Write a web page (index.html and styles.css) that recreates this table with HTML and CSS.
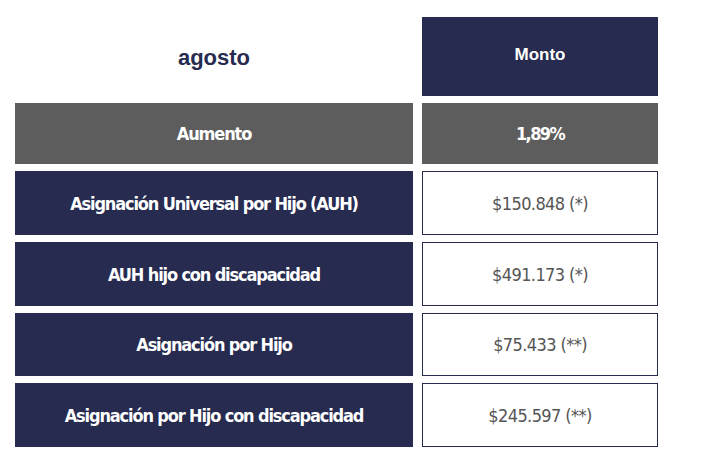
FILE: index.html
```html
<!DOCTYPE html>
<html lang="es">
<head>
<meta charset="utf-8">
<title>Asignaciones agosto</title>
<link rel="stylesheet" href="styles.css">
</head>
<body>
<div class="table">
  <div class="cell head-month">agosto</div>
  <div class="cell head-amount">Monto</div>

  <div class="cell gray label">Aumento</div>
  <div class="cell gray label pct">1,89%</div>

  <div class="cell navy label">Asignación Universal por Hijo (AUH)</div>
  <div class="cell value">$150.848 (*)</div>

  <div class="cell navy label">AUH hijo con discapacidad</div>
  <div class="cell value">$491.173 (*)</div>

  <div class="cell navy label">Asignación por Hijo</div>
  <div class="cell value">$75.433 (**)</div>

  <div class="cell navy label">Asignación por Hijo con discapacidad</div>
  <div class="cell value">$245.597 (**)</div>
</div>
</body>
</html>
```
FILE: styles.css
```css
html, body {
  margin: 0;
  padding: 0;
  background: #ffffff;
}

.table {
  display: grid;
  grid-template-columns: 398px 236px;
  grid-template-rows: 79px 61px 64px 64px 63px 64px;
  column-gap: 9px;
  row-gap: 7px;
  margin: 17px 0 0 15px;
}

.cell {
  display: flex;
  align-items: center;
  justify-content: center;
  box-sizing: border-box;
  text-align: center;
}

.head-month {
  font-family: "Liberation Sans", Arial, sans-serif;
  font-weight: bold;
  font-size: 22px;
  color: #262b4f;
  padding-top: 2px;
}

.head-amount {
  background: #262b4f;
  color: #ffffff;
  font-family: "Liberation Sans", Arial, sans-serif;
  font-weight: bold;
  font-size: 17px;
  padding-bottom: 3px;
}

.label {
  font-family: "DejaVu Sans Condensed", "DejaVu Sans", sans-serif;
  font-stretch: condensed;
  font-weight: bold;
  font-size: 18px;
  color: #ffffff;
  letter-spacing: -1.15px;
}

.pct {
  letter-spacing: -1.6px;
}

.gray {
  background: #5d5d5d;
}

.navy {
  background: #262b4f;
}

.value {
  background: #ffffff;
  border: 1px solid #262b4f;
  font-family: "DejaVu Sans Condensed", "DejaVu Sans", sans-serif;
  font-stretch: condensed;
  font-size: 18px;
  color: #555555;
  letter-spacing: -0.6px;
}
```
